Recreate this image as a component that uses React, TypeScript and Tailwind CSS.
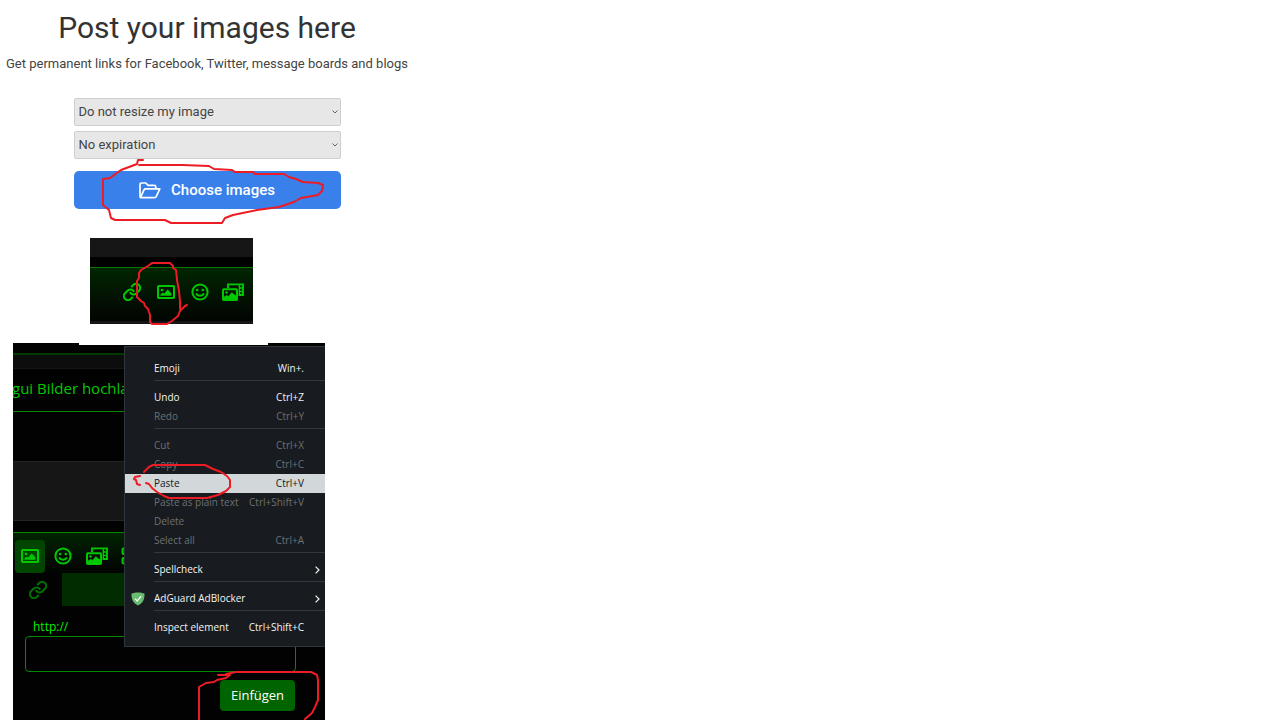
import type { ReactNode } from 'react';

/* Icons of the editor toolbar, drawn on an 18px grid. */
function LinkIcon({ className }: { className: string }) {
  return (
    <svg
      aria-hidden
      viewBox="1 1 22 22"
      className={className}
      fill="none"
      stroke="currentColor"
      strokeWidth="2.5"
      strokeLinecap="round"
    >
      <path d="M10 13a5 5 0 0 0 7.54.54l3-3a5 5 0 0 0-7.07-7.07l-1.72 1.71" />
      <path d="M14 11a5 5 0 0 0-7.54-.54l-3 3a5 5 0 0 0 7.07 7.07l1.71-1.71" />
    </svg>
  );
}

function ImageIcon() {
  return (
    <svg aria-hidden viewBox="0 0 18 14" className="h-[14px] w-[18px]">
      <rect x="1" y="1" width="16" height="12" rx="0.8" fill="none" stroke="currentColor" strokeWidth="2" />
      <circle cx="5" cy="5" r="1.3" fill="currentColor" />
      <path d="M3.4 10.8V9.4l2.2-2 1.6 1.1 3.4-4 3.8 3.7v2.6z" fill="currentColor" />
    </svg>
  );
}

function SmileyIcon() {
  return (
    <svg aria-hidden viewBox="0 0 18 18" className="size-[18px]" fill="none" stroke="currentColor" strokeWidth="2">
      <circle cx="9" cy="9" r="7.6" />
      <circle cx="6.2" cy="7" r="1.3" fill="currentColor" stroke="none" />
      <circle cx="11.8" cy="7" r="1.3" fill="currentColor" stroke="none" />
      <path d="M5 10.6c1.8 3 6.200 3 8 0" />
    </svg>
  );
}

function MediaIcon() {
  return (
    <svg aria-hidden viewBox="0 0 22 18" className="h-[18px] w-[22px]">
      <path d="M6 5V1.400h15v10.600h-4.400" fill="none" stroke="currentColor" strokeWidth="1.900" />
      <path d="M17.400 1.200v11M17.400 5h3.400M17.400 8.600h3.400" fill="none" stroke="currentColor" strokeWidth="1.500" />
      <rect x="1" y="6.200" width="14" height="10.800" rx="0.800" fill="none" stroke="currentColor" strokeWidth="2" />
      <circle cx="4.500" cy="9.500" r="1.200" fill="currentColor" />
      <path d="M2 16v-2.200l2.800-1.800 1.600 1.200 3.400-4 4.200 3.600V16z" fill="currentColor" />
    </svg>
  );
}

function BlocksIcon() {
  return (
    <svg aria-hidden viewBox="0 0 18 18" className="size-[18px]" fill="none" stroke="currentColor" strokeWidth="2">
      <rect x="1.500" y="1.500" width="6" height="5.500" rx="1" />
      <rect x="11" y="1.500" width="6" height="5.500" rx="1" />
      <rect x="1.500" y="11" width="6" height="5.500" rx="1" />
    </svg>
  );
}

function FolderIcon() {
  return (
    <svg
      aria-hidden
      viewBox="0 0 22 17"
      className="h-[17px] w-[22px]"
      fill="none"
      stroke="currentColor"
      strokeWidth="1.7"
      strokeLinejoin="round"
    >
      <path d="M1 14.6V2.4Q1 1 2.4 1h4.4l2.4 2.3h6q1.6 0 1.6 1.5v2" />
      <path d="M1.4 15.6 5 7.8q.5-1 1.6-1h14.2l-3.6 7.8q-.5 1-1.6 1H2.2q-1.2 0-1.2-1.2" />
    </svg>
  );
}

function ShieldIcon() {
  return (
    <svg aria-hidden viewBox="0 0 14 14" className="size-[14px]">
      <path d="M7 .4c2.2 0 4.6.4 6.500 1.200 0 5-.4 8.600-6.500 12C.9 10.200.5 6.600.5 1.600 2.400.8 4.800.4 7 .4z" fill="#68bc71" />
      <path d="M3.900 6.600l2.300 2.400 4-4.900" fill="none" stroke="#fff" strokeWidth="1.200" />
    </svg>
  );
}

/* Freehand red pen stroke laid over a figure. */
function Marker({ viewBox, className, d }: { viewBox: string; className: string; d: string }) {
  return (
    <svg aria-hidden viewBox={viewBox} className={`pointer-events-none absolute ${className}`}>
      <path d={d} fill="none" stroke="#ed1c24" strokeWidth="2" strokeLinejoin="round" strokeLinecap="round" />
    </svg>
  );
}

function SelectBox({ label, value }: { label: string; value: string }) {
  return (
    <div className="relative">
      <select
        aria-label={label}
        className="block h-7 w-full appearance-none rounded-[2px] border border-[#cecece] bg-[#e7e7e7] pl-1 text-[13px] text-[#444]"
      >
        <option>{value}</option>
      </select>
      <svg
        aria-hidden
        viewBox="0 0 6 4"
        className="pointer-events-none absolute right-[3px] top-3 h-1 w-1.5"
        fill="none"
        stroke="#666"
      >
        <path d="M.5.5 3 3 5.5.5" />
      </svg>
    </div>
  );
}

function UploadForm() {
  return (
    <form className="relative mx-auto mt-6 w-[267px]">
      <div className="flex flex-col gap-[5px]">
        <SelectBox label="Resize" value="Do not resize my image" />
        <SelectBox label="Expiration" value="No expiration" />
      </div>
      <button
        type="button"
        className="mt-3 flex h-[38px] w-full items-center justify-center gap-2.5 rounded-[5px] bg-[#3980ea] text-[15px] font-medium text-white"
      >
        <FolderIcon />
        Choose images
      </button>
      <Marker
        viewBox="100 156 226 70"
        className="left-[26px] top-[58px] h-[70px] w-[226px]"
        d="M143 160h-5l-1 4-8 3-8 3-7 5-4 3-7 1v26l6 5 2 8 4 2h50l6 3h51l3-5 8-3 24-5 22-3 15-5 7-4 17-3 4-4 1-6-5-2-15-1-7-3-7-2-5-3h-29l-2-2h-18l-3-2-18-1-5-3-27-1h-43"
      />
    </form>
  );
}

function IconButton({ label, children, className = '' }: { label: string; children: ReactNode; className?: string }) {
  return (
    <button type="button" aria-label={label} className={`flex shrink-0 items-center justify-center ${className}`}>
      {children}
    </button>
  );
}

function ToolbarShot() {
  return (
    <figure className="relative ml-[90px] mt-[29px] w-[163px]">
      <div className="h-[19px] bg-[#161616]" />
      <div className="h-[10px] bg-[#020202]" />
      <div className="flex h-[54px] items-center border-t border-[#087808] bg-linear-to-b from-[#002600] to-[#020502] pb-1.5 pl-[33px] text-[#00c800]">
        <IconButton label="Link" className="w-[18px]">
          <LinkIcon className="size-[18px]" />
        </IconButton>
        <IconButton label="Image" className="ml-4 w-[18px]">
          <ImageIcon />
        </IconButton>
        <IconButton label="Smileys" className="ml-4 w-[18px]">
          <SmileyIcon />
        </IconButton>
        <IconButton label="Media" className="ml-[13px] w-[22px]">
          <MediaIcon />
        </IconButton>
      </div>
      <div className="h-[3px] bg-[#161616]" />
      <Marker
        viewBox="134 258 56 70"
        className="left-11 top-5 h-[70px] w-14"
        d="M180 309v-8l-1-10-2-11-1-10-3-2v-2l-3-3h-18l-4 3-7 4-2 3v5l-2 3v16l4 4 3 2 1 3 3 3 2 6v7l2 2h15l5-3 6-5 2-5 5-5 2-1"
      />
    </figure>
  );
}

interface Entry {
  label: string;
  keys?: string;
  off?: boolean;
  selected?: boolean;
  submenu?: boolean;
  icon?: boolean;
}

const GROUPS: Entry[][] = [
  [{ label: 'Emoji', keys: 'Win+.' }],
  [
    { label: 'Undo', keys: 'Ctrl+Z' },
    { label: 'Redo', keys: 'Ctrl+Y', off: true },
  ],
  [
    { label: 'Cut', keys: 'Ctrl+X', off: true },
    { label: 'Copy', keys: 'Ctrl+C', off: true },
    { label: 'Paste', keys: 'Ctrl+V', selected: true },
    { label: 'Paste as plain text', keys: 'Ctrl+Shift+V', off: true },
    { label: 'Delete', off: true },
    { label: 'Select all', keys: 'Ctrl+A', off: true },
  ],
  [{ label: 'Spellcheck', submenu: true }],
  [{ label: 'AdGuard AdBlocker', submenu: true, icon: true }],
  [{ label: 'Inspect element', keys: 'Ctrl+Shift+C' }],
];

function entryTone(e: Entry) {
  if (e.selected) return 'bg-[#d2d7da] text-[#15191d]';
  return e.off ? 'text-[#6d7174]' : 'text-[#f4f4f4]';
}

function ContextMenu() {
  return (
    <div
      role="menu"
      className="absolute left-[111px] right-0 top-[3px] border border-r-0 border-[#30353b] bg-[#181b1f] pb-[9px] pt-3 text-[10px]"
    >
      {GROUPS.map((group, i) => (
        <div key={group[0].label}>
          {i > 0 && <div role="separator" className="mb-[7px] ml-[29px] mt-[2px] border-t border-[#34383c]" />}
          {group.map((e) => (
            <button
              key={e.label}
              type="button"
              role="menuitem"
              className={`flex h-[19px] w-full items-center ${entryTone(e)}`}
            >
              <span className="flex w-[29px] shrink-0 pl-1.5">{e.icon && <ShieldIcon />}</span>
              <span className="whitespace-nowrap">{e.label}</span>
              {e.keys && <span className="ml-auto mr-[21px] whitespace-nowrap">{e.keys}</span>}
              {e.submenu && (
                <svg
                  aria-hidden
                  viewBox="0 0 5 8"
                  className="ml-auto mr-[5px] h-2 w-[5px]"
                  fill="none"
                  stroke="currentColor"
                  strokeWidth="1.2"
                >
                  <path d="M.6.6 4 4 .6 7.4" />
                </svg>
              )}
            </button>
          ))}
        </div>
      ))}
    </div>
  );
}

function PasteShot() {
  return (
    <figure className="relative ml-[13px] mt-[19px] w-[312px] bg-[#020202] font-['Open_Sans',sans-serif]">
      <div className="h-[10px] pl-[66px]">
        <div className="h-[2px] w-[189px] bg-white" />
      </div>
      <div className="h-4 border-b border-t-2 border-b-[#161616] border-t-[#003c00] bg-[#0d0d0d]" />
      <div className="flex h-[43px] items-center overflow-hidden border-b border-[#008a00] pb-1 text-[15px] text-[#00c800]">
        <span className="-ml-px whitespace-nowrap">gui Bilder hochladen</span>
      </div>
      <div className="mt-[49px] h-[60px] border-y border-[#242424] bg-[#161616]" />
      <div className="mt-[11px] flex h-[41px] items-center border-t border-[#008a00] bg-linear-to-b from-[#002400] to-[#020402] pt-[6px] text-[#00c800]">
        <IconButton label="Image" className="ml-0.5 h-[33px] w-[30px] rounded-[4px] bg-[#004600]">
          <ImageIcon />
        </IconButton>
        <IconButton label="Smileys" className="ml-[9px] w-[18px]">
          <SmileyIcon />
        </IconButton>
        <IconButton label="Media" className="ml-[14px] w-[22px]">
          <MediaIcon />
        </IconButton>
        <IconButton label="More" className="ml-[13px] w-[18px]">
          <BlocksIcon />
        </IconButton>
      </div>
      <div className="flex h-[33px] items-center">
        <IconButton label="Link" className="ml-4 w-[18px] text-[#007000]">
          <LinkIcon className="size-[18px]" />
        </IconButton>
        <div className="ml-[15px] h-full w-[120px] bg-[#002c00]" />
      </div>
      <div className="px-3 pt-3">
        <label htmlFor="url" className="block pl-2 text-[12px] leading-[18px] text-[#00f000]">
          http://
        </label>
        <input
          id="url"
          type="text"
          className="block h-9 w-[271px] rounded-[4px] border border-[#008a00] bg-transparent px-2 text-white"
        />
      </div>
      <div className="flex justify-end pb-[9px] pr-[30px] pt-2">
        <button type="button" className="h-[31px] w-[75px] rounded-[4px] bg-[#006400] text-[13px] text-white">
          Einfügen
        </button>
      </div>
      <ContextMenu />
      <Marker
        viewBox="132 462 100 40"
        className="left-[119px] top-[119px] h-10 w-[100px]"
        d="M140 485l-3-1-1-4-2-1 1-2 5-1M146 483l3 1 3 4 5 4 7 4 5 2h38l11-3 8-4 4-4v-7l-3-4-6-4-8-3-8-4h-52l-4 2-5 5"
      />
      <Marker
        viewBox="196 668 126 52"
        className="left-[183px] top-[325px] h-[52px] w-[126px]"
        d="M218 675h12l-4 3-9 2-3 2-8 1-7 4v33M226 674l10-2h75l6 3 1 5v20l-3 7-3 6-7 6"
      />
    </figure>
  );
}

export default function App() {
  return (
    <main className="min-h-screen bg-white font-['Roboto',sans-serif] text-[#333]">
      <header className="w-[414px] max-w-full text-center">
        <h1 className="pt-2.5 text-[30px] leading-9">Post your images here</h1>
        <p className="mt-2 whitespace-nowrap text-[13px] leading-5 text-[#444]">
          Get permanent links for Facebook, Twitter, message boards and blogs
        </p>
      </header>
      <section className="w-[414px] max-w-full">
        <UploadForm />
        <ToolbarShot />
        <PasteShot />
      </section>
    </main>
  );
}
